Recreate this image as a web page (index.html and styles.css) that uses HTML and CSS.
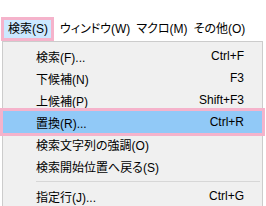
FILE: index.html
```html
<!DOCTYPE html>
<html lang="ja">
<head>
  <meta charset="UTF-8">
  <title>検索メニュー</title>
  <link rel="stylesheet" href="styles.css">
</head>
<body>
<div class="menubar">
  <div class="bar-item bar-open">検索(S)</div>
  <div class="bar-item">ウィンドウ(W)</div>
  <div class="bar-item">マクロ(M)</div>
  <div class="bar-item">その他(O)</div>
</div>
<div class="dropdown">
  <div class="row"><span class="label">検索(F)...</span><span class="key">Ctrl+F</span></div>
  <div class="row"><span class="label">下候補(N)</span><span class="key">F3</span></div>
  <div class="row"><span class="label">上候補(P)</span><span class="key">Shift+F3</span></div>
  <div class="row row-hot"><span class="label">置換(R)...</span><span class="key">Ctrl+R</span></div>
  <div class="row"><span class="label">検索文字列の強調(O)</span></div>
  <div class="row"><span class="label">検索開始位置へ戻る(S)</span></div>
  <div class="sep"></div>
  <div class="row"><span class="label">指定行(J)...</span><span class="key">Ctrl+G</span></div>
</div>
</body>
</html>
```

FILE: styles.css
```css
/* menu screenshot */
body {
  margin: 0;
  background: #ffffff;
  font-family: "Liberation Sans", "Noto Sans CJK JP", sans-serif;
  font-feature-settings: "palt";
  font-size: 12px;
  color: #000;
  overflow: hidden;
}

.menubar {
  display: flex;
  padding-top: 17px;
  padding-left: 1px;
  height: 24px;
}

.bar-item {
  display: flex;
  align-items: center;
  flex-shrink: 0;
  white-space: nowrap;
  height: 24px;
  box-sizing: border-box;
  padding: 0 3px;
  line-height: 1;
}

.bar-open {
  border: 3px solid #f5b3cb;
  background: #cce8ff;
  padding: 0 4px;
  width: 53px;
  margin-right: 3px;
}

.dropdown {
  margin-left: 2px;
  width: 261px;
  box-sizing: border-box;
  background: #f0f0f0;
  border-top: 1px solid #cccccc;
  border-left: 1px solid #cccccc;
  border-right: 1px solid #cccccc;
  padding-top: 3px;
  height: 165px;
}

.row {
  display: flex;
  justify-content: space-between;
  align-items: center;
  white-space: nowrap;
  height: 22px;
  padding: 0 18px 0 33px;
}

.row-hot {
  background: #91c9f7;
  outline: 3px solid #f5b3cb;
}

.sep {
  height: 1px;
  background: #d7d7d7;
  margin: 4px 2px 3px 33px;
}
```
